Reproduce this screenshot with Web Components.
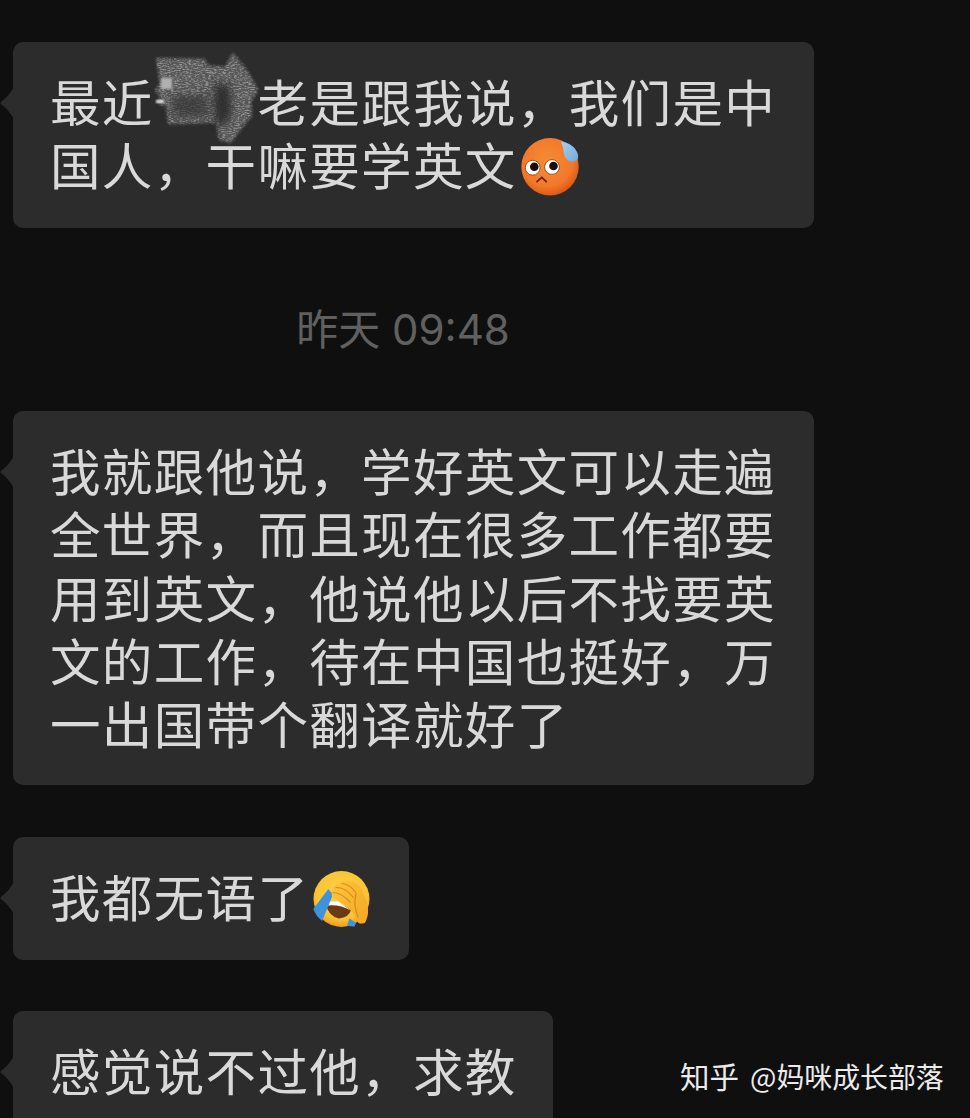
<!DOCTYPE html>
<html lang="zh-CN"><head><meta charset="utf-8"><title>chat</title>
<style>
html,body{margin:0;padding:0;height:1118px;overflow:hidden;background:#0f0f0f}
</style></head><body>
<chat-page>
  <chat-bubble style="margin-top:42px;width:801px">最近<smudge-mark></smudge-mark>老是跟我说，我们是中<br>国人，干嘛要学英文<emoji-sweat></emoji-sweat></chat-bubble>
  <chat-time>昨天 09:48</chat-time>
  <chat-bubble style="padding-bottom:31px">我就跟他说，学好英文可以走遍全世界，而且现在很多工作都要用到英文，他说他以后不找要英文的工作，待在中国也挺好，万一出国带个翻译就好了</chat-bubble>
  <chat-bubble style="margin-top:51.800px">我都无语了<emoji-laugh></emoji-laugh></chat-bubble>
  <chat-bubble style="margin-top:51.200px">感觉说不过他，求教</chat-bubble>
  <zhihu-mark><span style="font-size:29.5px;margin-right:11px">知乎</span>@妈咪成长部落</zhihu-mark>
</chat-page>
<script>
function def(name, html){
  customElements.define(name, class extends HTMLElement{
    constructor(){super();this.attachShadow({mode:'open'}).innerHTML=html;}
  });
}
const CJK='"Noto Sans CJK SC","Liberation Sans",sans-serif';
def('chat-page',`<style>:host{display:flex;flex-direction:column;align-items:flex-start;height:1118px;overflow:hidden;position:relative;padding-left:13px;box-sizing:border-box;font-family:${CJK};background:#0f0f0f}</style><slot></slot>`);
def('chat-bubble',`<style>
:host{display:block;position:relative;box-sizing:border-box;width:fit-content;max-width:801px;flex:none;padding:27.200px 36.500px 32.400px 37px;background:#2c2c2c;border-radius:10px;color:#d9d9d9;font-size:50.500px;letter-spacing:1.350px;line-height:63.200px;text-spacing-trim:space-all}
.tail{position:absolute;left:-13px;top:45px;width:14px;height:32px;display:block}
</style><svg class="tail" viewBox="0 0 14 32"><path d="M14 0 Q8 10 .8 15 Q0 16 .8 17 Q8 22 14 32Z" fill="#2c2c2c"/></svg><slot></slot>`);
def('chat-time',`<style>:host{display:block;align-self:stretch;margin:78px 0 57px;width:780px;text-align:center;color:#606060;font-family:Inter,${CJK};font-size:42px;line-height:48px}</style><slot></slot>`);
def('zhihu-mark',`<style>:host{position:absolute;left:680px;top:1055px;color:#ebebeb;font-size:27.900px;line-height:40px;white-space:nowrap}</style><slot></slot>`);
def('smudge-mark',`<style>:host{display:inline-block;position:relative;width:103.900px;height:1px}
svg{position:absolute;left:-.900px;top:-72px;width:115px;height:100px;overflow:visible}</style>
<svg viewBox="153 50 115 100">
<defs>
<filter id="n" x="-15%" y="-15%" width="130%" height="130%" color-interpolation-filters="sRGB"><feTurbulence type="fractalNoise" baseFrequency=".35 .95" numOctaves="4" seed="11" result="t"/><feColorMatrix in="t" values="0 0 0 0 .58  0 0 0 0 .58  0 0 0 0 .58  3 0 0 0 -1.250" result="f"/><feGaussianBlur in="SourceGraphic" stdDeviation="1.800" result="soft"/><feComposite in="f" in2="soft" operator="in" result="ins"/><feMerge><feMergeNode in="soft"/><feMergeNode in="ins"/></feMerge></filter>
<filter id="s" x="-40%" y="-40%" width="180%" height="180%"><feGaussianBlur stdDeviation="4"/></filter>
<filter id="b"><feGaussianBlur stdDeviation="1.300"/></filter>
</defs>
<path filter="url(#n)" fill="#565656" d="M156 59 L205 60 L207 66 L225 68 L233 54 L243 66 L250 76 L258 91 L251 103 L252 117 L241 130 L231 144 L219 141 L216 124 L168 125 L166 108 L158 104 L160 96 L155 92 L160 84Z"/>
<path filter="url(#s)" fill="#2b2b2b" opacity=".95" d="M214 84 L229 86 L232 112 L224 128 L215 124Z"/>
<path filter="url(#s)" fill="#333" opacity=".7" d="M172 96 L208 96 L208 118 L172 118Z"/>
<rect filter="url(#b)" x="161" y="79" width="11" height="11" fill="#b0b0b0"/>
<rect filter="url(#b)" x="156" y="101" width="8" height="3" fill="#e6e6e6"/>
</svg>`);
def('emoji-sweat',`<style>:host{display:inline-block;width:60px;height:60px;margin:-10px 0 -10px 3px;vertical-align:-2px}svg{display:block;width:60px;height:60px}</style>
<svg viewBox="0 0 60 60">
<defs><radialGradient id="o" cx=".45" cy=".4" r=".62"><stop offset="0" stop-color="#f68b36"/><stop offset=".72" stop-color="#f2782a"/><stop offset="1" stop-color="#dc5612"/></radialGradient>
<linearGradient id="d" x1="0" y1="0" x2="1" y2="1"><stop offset="0" stop-color="#a9d0ef"/><stop offset="1" stop-color="#6fa9dd"/></linearGradient></defs>
<circle cx="30" cy="29.700" r="28.700" fill="url(#o)"/>
<circle cx="12.700" cy="30.700" r="7.400" fill="#fff" stroke="#8a3208" stroke-width=".8"/><circle cx="14.300" cy="29.800" r="4.300" fill="#1c0d08"/>
<circle cx="32" cy="30" r="7.400" fill="#fff" stroke="#8a3208" stroke-width=".8"/><circle cx="33.500" cy="29" r="4.300" fill="#1c0d08"/>
<path d="M17 44.700 L21.700 40.300 L26.300 44.700" fill="none" stroke="#6b2206" stroke-width="1.800" stroke-linecap="round" stroke-linejoin="round"/>
<path d="M41 4.500 Q51 6 55.500 12.500 Q60 19 57 23 Q53 26 48 23.500 Q44 20.500 43.500 14 Q43 9 41 4.500Z" fill="url(#d)"/>
</svg>`);
def('emoji-laugh',`<style>:host{display:inline-block;width:60px;height:60px;margin:-10px 0 -10px 3px;vertical-align:-2px}svg{display:block;width:60px;height:60px}</style>
<svg viewBox="0 0 60 60">
<defs><radialGradient id="y" cx=".5" cy=".4" r=".62"><stop offset="0" stop-color="#fdd648"/><stop offset=".75" stop-color="#fac233"/><stop offset="1" stop-color="#ec961a"/></radialGradient>
<linearGradient id="h" x1="0" y1="0" x2="1" y2="1"><stop offset="0" stop-color="#fcc63d"/><stop offset="1" stop-color="#f4a625"/></linearGradient></defs>
<circle cx="29.500" cy="30" r="28" fill="url(#y)"/>
<path d="M14 36 Q24 30 39 41 Q37 48.500 27 49.500 Q17 47.500 14 36Z" fill="#6b3a12"/>
<path d="M17 32.500 L26 32.500 L39 41.500 Q27 35 15.500 36.500Z" fill="#fff"/>
<path d="M1.300 40 L16.300 20 L21 25.500 L10 52 Q4 47 1.300 40Z" fill="#3f93dd"/>
<path d="M37.500 49.500 L44 54 L42.500 57.500 Q38.500 57.500 35 56.500Z" fill="#3f93dd"/>
<path d="M20.500 19 Q24 14 29.700 12 Q37 10.500 43 13.700 Q49 17 51.300 23.700 Q55.500 32 56 40.300 Q56.500 48 53 53.700 Q49 55.500 46.300 53.700 L43 47 Q40 42 36 38.500 L26.300 32 L19.700 27Z" fill="url(#h)"/>
<g fill="none" stroke="#dc8a18" stroke-width="1.200" stroke-linecap="round"><path d="M21 23.500 Q30 24 38 33"/><path d="M24 18.500 Q34 18.500 41 28"/><path d="M30 14.500 Q38 15 44 24"/><path d="M44 25 Q41 35 46 48"/></g>
</svg>`);
</script>
</body></html>
